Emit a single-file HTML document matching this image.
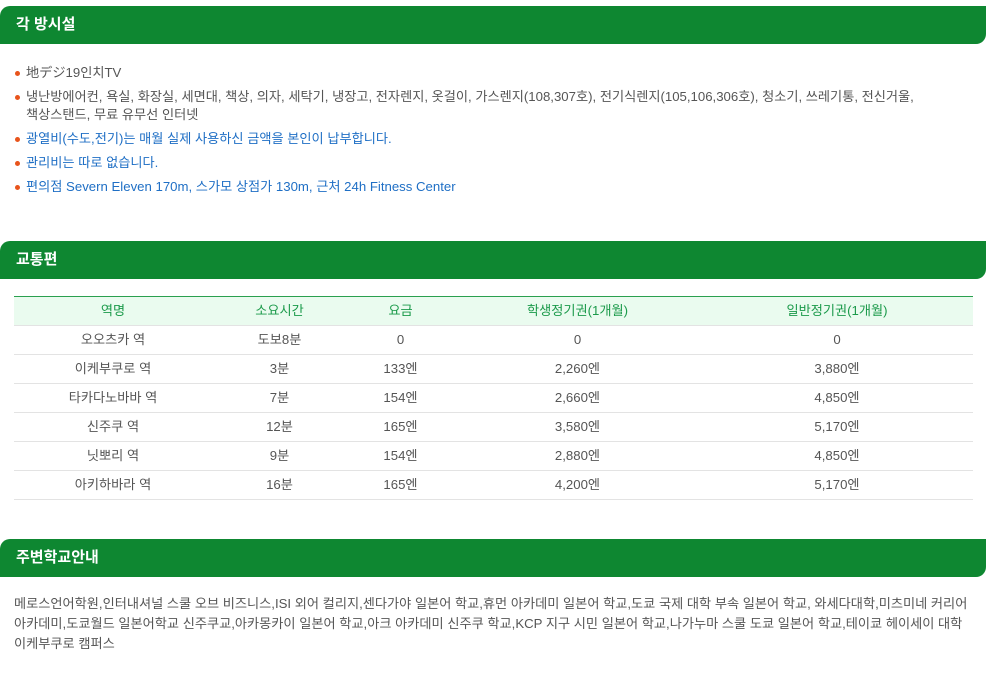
<!DOCTYPE html>
<html><head><meta charset="utf-8"><style>
body{margin:0;background:#fff;font-family:"Liberation Sans","Noto Sans CJK KR",sans-serif;font-size:13.2px;color:#555;}
.bar{position:absolute;left:0;width:986px;height:38px;background:#0e8731;border-radius:10px 0 10px 0;color:#fff;font-weight:bold;font-size:15px;line-height:38px;box-sizing:border-box;padding-left:16px;}
ul{position:absolute;left:0;margin:0;padding:0;list-style:none;width:950px}
li{position:relative;padding-left:26px;line-height:18px;margin-bottom:6px}
li:before{content:"";position:absolute;left:15px;top:7px;width:5px;height:5px;border-radius:50%;background:#e8541c}
.b{color:#1f6fc5}
table{position:absolute;left:14px;top:296px;width:959px;border-collapse:collapse;text-align:center}
th,td{padding:0;height:28px;line-height:28px}
th{font-weight:normal;color:#1b9a4a;background:#eafbef;border-top:1px solid #2aa04f}
td{border-top:1px solid #e3e3e3}
tr:last-child td{border-bottom:1px solid #e3e3e3}
.sch{position:absolute;left:14px;top:594px;width:970px;line-height:20px;}
</style></head><body>
<div class="bar" style="top:6px">각 방시설</div>
<ul style="top:64px">
<li>地デジ19인치TV</li>
<li>냉난방에어컨, 욕실, 화장실, 세면대, 책상, 의자, 세탁기, 냉장고, 전자렌지, 옷걸이, 가스렌지(108,307호), 전기식렌지(105,106,306호), 청소기, 쓰레기통, 전신거울,<br>책상스탠드, 무료 유무선 인터넷</li>
<li class="b">광열비(수도,전기)는 매월 실제 사용하신 금액을 본인이 납부합니다.</li>
<li class="b">관리비는 따로 없습니다.</li>
<li class="b">편의점 Severn Eleven 170m, 스가모 상점가 130m, 근처 24h Fitness Center</li>
</ul>
<div class="bar" style="top:241px">교통편</div>
<table>
<colgroup><col style="width:198px"><col style="width:135px"><col style="width:107px"><col style="width:247px"><col></colgroup>
<tr><th>역명</th><th>소요시간</th><th>요금</th><th>학생정기권(1개월)</th><th>일반정기권(1개월)</th></tr>
<tr><td>오오츠카 역</td><td>도보8분</td><td>0</td><td>0</td><td>0</td></tr>
<tr><td>이케부쿠로 역</td><td>3분</td><td>133엔</td><td>2,260엔</td><td>3,880엔</td></tr>
<tr><td>타카다노바바 역</td><td>7분</td><td>154엔</td><td>2,660엔</td><td>4,850엔</td></tr>
<tr><td>신주쿠 역</td><td>12분</td><td>165엔</td><td>3,580엔</td><td>5,170엔</td></tr>
<tr><td>닛뽀리 역</td><td>9분</td><td>154엔</td><td>2,880엔</td><td>4,850엔</td></tr>
<tr><td>아키하바라 역</td><td>16분</td><td>165엔</td><td>4,200엔</td><td>5,170엔</td></tr>
</table>
<div class="bar" style="top:539px">주변학교안내</div>
<div class="sch">메로스언어학원,인터내셔널 스쿨 오브 비즈니스,ISI 외어 컬리지,센다가야 일본어 학교,휴먼 아카데미 일본어 학교,도쿄 국제 대학 부속 일본어 학교, 와세다대학,미츠미네 커리어<br>아카데미,도쿄월드 일본어학교 신주쿠교,아카몽카이 일본어 학교,아크 아카데미 신주쿠 학교,KCP 지구 시민 일본어 학교,나가누마 스쿨 도쿄 일본어 학교,테이쿄 헤이세이 대학<br>이케부쿠로 캠퍼스</div>
</body></html>
